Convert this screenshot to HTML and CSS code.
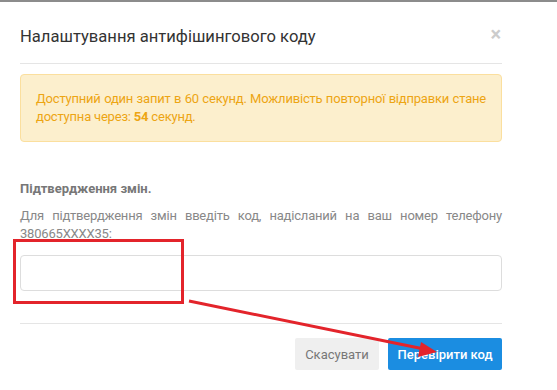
FILE: index.html
```html
<!DOCTYPE html>
<html lang="uk">
<head>
  <meta charset="UTF-8">
  <title>Налаштування антифішингового коду</title>
  <link rel="stylesheet" href="styles.css">
</head>
<body>
  <div class="page">
    <div class="modal">
      <div class="modal-header">
        <h4 class="modal-title">Налаштування антифішингового коду</h4>
        <span class="close">&times;</span>
      </div>

      <div class="alert">
        Доступний один запит в 60 секунд. Можливість повторної відправки стане доступна через: <b>54</b> секунд.
      </div>

      <div class="confirm">
        <p class="confirm-title">Підтвердження змін.</p>
        <p class="confirm-text">Для підтвердження змін введіть код, надісланий на ваш номер телефону 380665XXXX35:</p>
        <input type="text" class="code-input">
      </div>

      <div class="modal-footer">
        <button class="btn btn-cancel">Скасувати</button>
        <button class="btn btn-primary">Перевірити код</button>
      </div>
    </div>

    <!-- annotation -->
    <div class="mark"></div>
    <svg class="arrow" width="557" height="390" viewBox="0 0 557 390">
      <line x1="189" y1="301" x2="424" y2="349" stroke="#e3242b" stroke-width="3"/>
      <polygon points="437,352 421,342 418,357" fill="#e3242b"/>
    </svg>
  </div>
</body>
</html>
```

FILE: styles.css
```css
body {
  margin: 0;
  background: #fff;
  font-family: Roboto, "Liberation Sans", sans-serif;
}
.page {
  position: relative;
  width: 557px;
  height: 390px;
  border-top: 2px solid #8c8c8c;
  box-sizing: border-box;
  overflow: hidden;
}
.modal {
  width: 482px;
  padding: 0 20px;
}
.modal-header {
  display: flex;
  justify-content: space-between;
  align-items: flex-start;
  height: 61px;
  border-bottom: 1px solid #e5e5e5;
}
.modal-title {
  margin: 25px 0 0;
  font-size: 16.6px;
  font-weight: normal;
  line-height: 20px;
  color: #333;
}
.close {
  margin: 22px 1px 0 0;
  font-size: 20px;
  font-weight: bold;
  line-height: 20px;
  color: #ccc;
}
.alert {
  margin-top: 10px;
  padding: 15px;
  background: #fcefcd;
  border: 1px solid #fbdf9e;
  border-radius: 4px;
  color: #eda513;
  font-size: 13px;
  letter-spacing: -0.2px;
  line-height: 18px;
  text-align: justify;
}
.confirm {
  padding-top: 38px;
  padding-bottom: 32px;
  border-bottom: 1px solid #e5e5e5;
}
.confirm-title {
  margin: 0 0 9px;
  font-size: 13px;
  font-weight: bold;
  line-height: 18px;
  color: #777;
}
.confirm-text {
  margin: 0 0 12px;
  font-size: 13px;
  letter-spacing: -0.2px;
  line-height: 18px;
  color: #888;
  text-align: justify;
}
.code-input {
  display: block;
  width: 100%;
  height: 36px;
  box-sizing: border-box;
  border: 1px solid #ddd;
  border-radius: 4px;
}
.modal-footer {
  display: flex;
  justify-content: flex-end;
  gap: 9px;
  padding-top: 14px;
}
.btn {
  height: 32px;
  border: none;
  border-radius: 2px;
  font-family: Roboto, "Liberation Sans", sans-serif;
  font-size: 13px;
  padding: 0;
  white-space: nowrap;
}
.btn-cancel {
  width: 84px;
  background: #efefef;
  color: #777;
}
.btn-primary {
  width: 114px;
  background: #1b8de1;
  color: #fff;
  font-weight: 500;
}
.mark {
  position: absolute;
  left: 13px;
  top: 237px;
  width: 165px;
  height: 59px;
  border: 3px solid #e3242b;
}
.arrow {
  position: absolute;
  left: 0;
  top: -2px;
}
```
